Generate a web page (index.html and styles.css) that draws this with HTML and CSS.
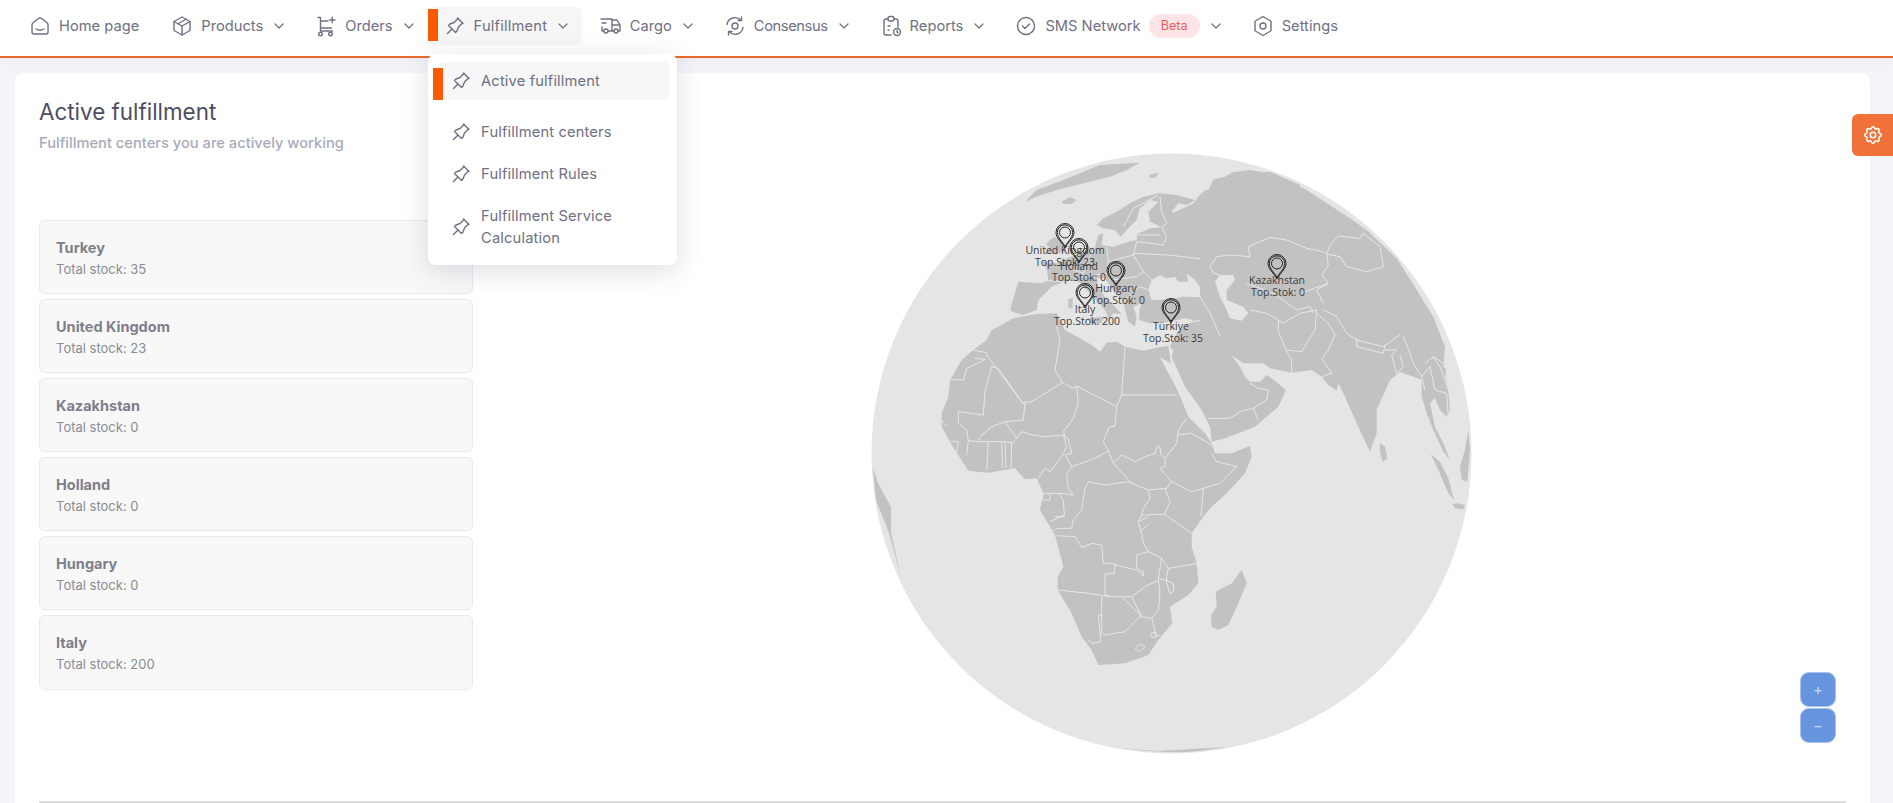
FILE: index.html
```html
<!DOCTYPE html>
<html lang="en">
<head>
<meta charset="utf-8">
<title>Active fulfillment</title>
<link rel="stylesheet" href="styles.css">
</head>
<body>
<svg class="defs" width="0" height="0" aria-hidden="true">
  <symbol id="i-home" viewBox="0 0 24 24"><path d="M19 8.71l-5.333-4.148a2.666 2.666 0 0 0-3.274 0L5.059 8.71a2.665 2.665 0 0 0-1.029 2.105v7.2a2 2 0 0 0 2 2h12a2 2 0 0 0 2-2v-7.2c0-.823-.38-1.6-1.03-2.105"/><path d="M16 15c-2.21 1.333-5.792 1.333-8 0"/></symbol>
  <symbol id="i-box" viewBox="0 0 24 24"><path d="M12 3l8 4.5v9l-8 4.5l-8-4.5v-9l8-4.5"/><path d="M12 12l8-4.5"/><path d="M12 12v9"/><path d="M12 12l-8-4.5"/><path d="M16 5.25l-8 4.5"/></symbol>
  <symbol id="i-cart" viewBox="0 0 24 24"><circle cx="6.500" cy="20" r="1.800"/><circle cx="16.500" cy="20" r="1.800"/><path d="M18.500 17H6.500V3.500H4"/><path d="M6.500 7h7.500"/><path d="M6.500 14h11"/><path d="M15.500 6h5.500"/><path d="M18.250 3.250v5.500"/></symbol>
  <symbol id="i-pin" viewBox="0 0 24 24"><path d="M15 4.500l-4 4l-4 1.500l-1.500 1.500l7 7l1.500-1.500l1.500-4l4-4"/><path d="M9 15l-4.500 4.500"/><path d="M14.500 4l5.500 5.500"/></symbol>
  <symbol id="i-truck" viewBox="0 0 24 24"><circle cx="7" cy="17" r="2"/><circle cx="17" cy="17" r="2"/><path d="M5 17H3v-4M2 5h11v12m-4 0h6m4 0h2v-6h-8m0-5h5l3 5"/><path d="M3 9h4"/></symbol>
  <symbol id="i-sync" viewBox="0 0 24 24"><circle cx="12" cy="12" r="3"/><path d="M4 10.500A8 8 0 0 1 18 6.500"/><path d="M20 13.500A8 8 0 0 1 6 17.500"/><path d="M18.500 3v3.500H15"/><path d="M5.500 21v-3.500H9"/></symbol>
  <symbol id="i-report" viewBox="0 0 24 24"><path d="M9 5H7a2 2 0 0 0-2 2v12a2 2 0 0 0 2 2h5"/><path d="M15 5h2a2 2 0 0 1 2 2v6"/><rect x="9" y="2.500" width="6" height="4.500" rx="2"/><path d="M9 12h2"/><path d="M9 16h1"/><circle cx="18" cy="18" r="3.500"/><path d="M18 16.500V18l1 .5"/></symbol>
  <symbol id="i-check" viewBox="0 0 24 24"><circle cx="12" cy="12" r="8.500"/><path d="M8.500 12l2.500 2.500l4.500-4.500"/></symbol>
  <symbol id="i-hex" viewBox="0 0 24 24"><path d="M12 2.500l8 4.750v9.500l-8 4.750l-8-4.750v-9.500z"/><circle cx="12" cy="12" r="3"/></symbol>
  <symbol id="i-gear" viewBox="0 0 24 24"><path d="M10.325 4.317c.426-1.756 2.924-1.756 3.350 0a1.724 1.724 0 0 0 2.573 1.066c1.543-.94 3.310.826 2.370 2.370a1.724 1.724 0 0 0 1.065 2.572c1.756.426 1.756 2.924 0 3.350a1.724 1.724 0 0 0-1.066 2.573c.94 1.543-.826 3.310-2.370 2.370a1.724 1.724 0 0 0-2.572 1.065c-.426 1.756-2.924 1.756-3.350 0a1.724 1.724 0 0 0-2.573-1.066c-1.543.94-3.310-.826-2.370-2.370a1.724 1.724 0 0 0-1.065-2.572c-1.756-.426-1.756-2.924 0-3.350a1.724 1.724 0 0 0 1.066-2.573c-.94-1.543.826-3.310 2.370-2.370c1 .608 2.296.07 2.572-1.065"/><circle cx="12" cy="12" r="3"/></symbol>
  <symbol id="i-chev" viewBox="0 0 10 10"><path d="M1 3l4 4l4-4"/></symbol>
  <symbol id="i-marker" viewBox="0 0 20 26"><path d="M10 25C7 19 1 15 1 9.500a9 9 0 0 1 18 0C19 15 13 19 10 25z"/><path d="M10 23.500C7.500 18.500 2.300 14.800 2.300 9.500a7.700 7.700 0 0 1 15.400 0C17.700 14.800 12.500 18.500 10 23.500z"/><circle cx="10" cy="9.500" r="5.500"/></symbol>
</svg>

<header class="topbar">
  <nav class="nav">
    <a class="nav-item"><svg class="ico"><use href="#i-home"/></svg><span>Home page</span></a>
    <a class="nav-item"><svg class="ico"><use href="#i-box"/></svg><span>Products</span><svg class="chev"><use href="#i-chev"/></svg></a>
    <a class="nav-item"><svg class="ico"><use href="#i-cart"/></svg><span>Orders</span><svg class="chev"><use href="#i-chev"/></svg></a>
    <div class="nav-wrap">
      <a class="nav-item is-active"><svg class="ico"><use href="#i-pin"/></svg><span>Fulfillment</span><svg class="chev"><use href="#i-chev"/></svg></a>
      <div class="menu">
        <a class="menu-item is-active"><svg class="ico"><use href="#i-pin"/></svg><span>Active fulfillment</span></a>
        <a class="menu-item"><svg class="ico"><use href="#i-pin"/></svg><span>Fulfillment centers</span></a>
        <a class="menu-item"><svg class="ico"><use href="#i-pin"/></svg><span>Fulfillment Rules</span></a>
        <a class="menu-item"><svg class="ico"><use href="#i-pin"/></svg><span>Fulfillment Service Calculation</span></a>
      </div>
    </div>
    <a class="nav-item"><svg class="ico"><use href="#i-truck"/></svg><span>Cargo</span><svg class="chev"><use href="#i-chev"/></svg></a>
    <a class="nav-item nav-tight"><svg class="ico"><use href="#i-sync"/></svg><span>Consensus</span><svg class="chev"><use href="#i-chev"/></svg></a>
    <a class="nav-item"><svg class="ico"><use href="#i-report"/></svg><span>Reports</span><svg class="chev"><use href="#i-chev"/></svg></a>
    <a class="nav-item"><svg class="ico"><use href="#i-check"/></svg><span>SMS Network</span><b class="badge">Beta</b><svg class="chev"><use href="#i-chev"/></svg></a>
    <a class="nav-item"><svg class="ico"><use href="#i-hex"/></svg><span>Settings</span></a>
  </nav>
</header>

<main class="page">
  <section class="card">
    <div class="content">
      <div class="side">
        <h1 class="title">Active fulfillment</h1>
        <p class="subtitle">Fulfillment centers you are actively working</p>
        <ul class="centers">
          <li class="center"><strong>Turkey</strong><span>Total stock: 35</span></li>
          <li class="center"><strong>United Kingdom</strong><span>Total stock: 23</span></li>
          <li class="center"><strong>Kazakhstan</strong><span>Total stock: 0</span></li>
          <li class="center"><strong>Holland</strong><span>Total stock: 0</span></li>
          <li class="center"><strong>Hungary</strong><span>Total stock: 0</span></li>
          <li class="center"><strong>Italy</strong><span>Total stock: 200</span></li>
        </ul>
      </div>
      <div class="map">
        <svg class="globe" viewBox="860 140 630 640" width="630" height="640" role="img" aria-label="Globe with fulfillment centers">
          <defs><clipPath id="disc"><circle cx="1171.500" cy="453.500" r="299"/></clipPath></defs>
          <circle class="ocean" cx="1171.500" cy="453.500" r="300"/>
          <g clip-path="url(#disc)">
            <g transform="translate(850 140) scale(.33333)">
              <path class="land" d="M525 185L560 150L640 120L750 75L870 68L830 90L780 110L700 130L620 150L560 170Z"/>
              <path class="land" d="M635 185L660 172L680 180L665 192L640 192Z"/>
              <path class="land" d="M898 105L925 98L920 112L900 115Z"/>
              <path class="land" d="M588 312L610 292L630 295L650 330L620 342L580 342L600 325Z"/>
              <path class="land" d="M740 255L760 235L800 215L840 190L880 170L925 160L980 165L1035 180L1010 195L985 190L965 215L990 228L950 260L935 262L900 245L895 215L925 185L900 180L870 205L860 240L830 270L812 290L795 270L760 265Z"/>
              <path class="land" d="M505 425L480 510L495 518L520 525L560 510L565 480L605 440L640 425L680 420L700 440L730 470L765 510L775 535L765 552L790 520L815 522L790 495L765 470L745 440L740 415L765 415L785 445L820 485L825 510L835 545L855 560L860 530L850 500L875 490L868 510L868 540L900 550L960 545L1005 535L1030 540L1000 560L980 600L965 625L1000 640L1140 640L1350 640L1350 135L1260 95L1200 100L1150 95L1125 110L1090 118L1075 140L1045 170L1030 190L1000 205L975 215L935 262L900 265L862 282L860 300L835 305L790 320L755 315L760 280L745 285L735 320L700 335L680 345L650 355L620 370L575 365L590 385L595 422L575 430Z"/>
              <path class="land" d="M655 478L668 474L668 505L655 505Z"/>
              <path class="land" d="M715 535L760 530L755 550L725 550Z"/>
              <path class="sea" d="M895 450L905 420L930 405L950 415L975 410L985 425L1015 425L1010 400L1035 420L1065 462L1050 472L1000 470L960 478L925 480L905 480Z"/>
              <path class="sea" d="M1050 150L1075 118L1090 118L1075 150Z"/>
              <path class="sea" d="M1125 145L1150 135L1175 165L1165 185L1145 170Z"/>
              <path class="border" d="M925 165L850 205L820 260M930 170L935 215L950 250L935 262M865 285L930 285M860 305L940 315L950 290L935 262M850 340L950 345L1000 350L1080 360L1085 390M770 320L775 365L850 345L860 305M735 320L720 350L700 400L670 390M700 410L770 400L775 365M850 345L880 395L905 420M770 400L790 420L860 410L880 395M820 485L870 440L895 450M595 422L640 425M1020 455L1090 490L1075 505L1090 535L1000 550M1090 535L1060 590L1015 600L985 600M1075 505L1090 535L1110 590L1140 640M1015 600L1060 640L1140 640"/>
            </g>
            <g transform="translate(1200 150) scale(.33333)">
              <path class="land" d="M0 140L110 65L150 60L210 70L320 120L450 205L500 240L590 325L650 420L700 500L735 590L730 650L745 720L750 780L740 800L720 780L705 745L690 760L705 830L730 880L750 930L730 905L700 840L680 790L665 740L665 690L640 680L610 670L600 665L570 690L530 780L530 850L510 905L470 820L430 730L415 700L410 722L385 705L365 680L335 660L275 668L210 655L190 640L130 640L85 610L0 610Z"/>
              <path class="land" d="M540 880L555 890L562 925L548 935L540 905Z"/>
              <path class="land" d="M727 650L737 655L737 675L728 670Z"/>
              <path class="land" d="M692 912L720 935L745 985L762 1050L745 1030L715 960Z"/>
              <path class="land" d="M805 840L810 900L802 995L785 990L780 950L795 900Z"/>
              <path class="land" d="M757 1062L770 1060L795 1065L790 1078L765 1075Z"/>
              <path class="sea" d="M45 395L60 375L100 375L105 390L80 420L80 450L130 470L145 490L125 512L90 505L80 480L60 440Z"/>
              <path class="border" d="M30 350L50 320L90 315L150 320L145 290L210 262L260 270L320 295L370 305L380 312L385 345L365 375L385 400L350 420L370 460M30 350L40 370L60 375M380 312L390 285L415 258L480 265L490 250L540 290L550 350L500 365L440 350L420 320L380 312M140 400L220 430L290 480L330 470L340 490M150 480L200 490L235 510L250 520L300 490M300 430L385 400M235 510L235 545L258 600L275 630L275 668M258 600L305 605L345 540L350 480L300 490M350 490L385 520L405 555L385 600L365 625L395 670L365 680M370 480L410 500L440 550L470 570L550 590L600 555M470 565L470 590L550 610L555 585M555 600L590 600L575 615L590 670L610 650L600 615M610 560L630 610L640 640L665 680L675 720M675 640L700 620L720 650L745 720M665 680L690 650L705 720L740 730L745 800M700 620L730 640M0 440L30 490L70 580L85 610M0 625L75 625L90 610"/>
            </g>
            <g transform="translate(925 320) scale(.33333)">
              <path class="land" d="M265 -5L335 -18L395 -20L420 30L470 58L500 75L525 95L545 68L575 65L600 80L655 92L700 82L730 78L738 130L705 112L725 150L750 195L770 240L790 290L840 340L860 370L870 400L920 400L975 378L980 410L960 460L905 520L860 560L835 590L800 640L800 680L815 730L820 790L790 825L735 860L742 910L700 960L670 1005L600 1030L520 1035L500 990L470 950L440 880L398 810L398 770L415 740L390 645L345 570L355 520L335 475L300 478L270 445L190 458L130 452L80 375L50 320L50 280L70 230L75 180L110 120L145 90L185 60L200 30L230 15Z"/>
              <path class="land" d="M745 90L740 110L780 200L830 270L855 320L860 365L900 355L990 320L1060 260L1083 210L1040 175L1025 165L1005 185L975 185L960 170L945 140L915 100L900 50L760 30L735 80Z"/>
              <path class="land" d="M950 750L965 790L940 850L910 915L880 930L860 920L858 885L875 860L872 815L920 790Z"/>
              <path class="border" d="M145 90L185 98L185 105L290 245M148 115L182 118L125 145L115 180L78 178M200 140L220 145L290 245M200 140L180 215L175 285L100 275L100 310L125 330L130 362L125 405M395 20L405 60L400 90L390 150L412 188L320 245L290 248L300 250L295 300L240 305L200 320L165 350L160 365L130 362M412 188L445 205L455 198L460 250L445 295L415 335L420 345L360 350L320 345L290 335L275 355L240 305M455 198L575 260L590 225L600 80M590 225L755 225M575 260L570 318L552 322L535 365L550 393L510 415L440 440L420 405L440 400L430 360L420 345M440 440L425 465L430 505L445 525M480 505L490 485L540 495L610 485L620 490M550 393L565 430L620 490M565 430L590 405L630 425L665 408L690 400L695 380L705 380L708 405L720 415L720 440L705 445L740 485L725 505L670 510L620 490M785 295L760 330L755 370L720 415M760 345L800 340L860 375M860 400L875 425L935 440L885 490L835 505L800 515L740 485M835 505L828 590M720 505L735 545L718 583L800 640M670 510L675 535L655 565L650 585L718 583M650 585L640 605L650 640L655 670L670 695M640 605L670 590M645 635L668 615M670 695L710 715L730 745L818 730M635 705L635 745L655 755L655 768L635 750L570 735L565 730L535 730L530 675L500 670L470 683L450 650L395 647M635 705L670 695M540 762L568 760L570 730M540 762L540 825L560 830M398 810L490 820L560 830L590 830L620 830L660 800M710 715L700 775L720 780L745 790L745 815L735 820L725 790L725 770L730 745M660 800L700 780M620 830L650 890L680 895L700 870L705 815L700 780M590 830L620 860L650 890M530 830L530 885L520 885L528 965L500 970L490 960M530 885L530 940L540 945L600 935L640 895L650 890M680 895L695 950L705 945M50 300L65 320M78 365L100 365L95 400M190 365L185 450M230 365L232 445M243 445L240 365M260 365L258 445M275 355L262 370L245 365L185 365L160 365M415 345L425 380L410 410L375 455L360 445L340 475M445 525L400 520L355 520L350 540L375 540L375 522M400 520L415 540L418 585L375 605M390 590L420 590M480 505L470 570L445 600L440 625L400 625L385 630M850 295L915 295L945 275L985 265L1025 240L1030 210L1000 205L975 190M985 265L1000 300"/>
              <circle class="ring" cx="685" cy="945" r="8"/>
              <path class="ring" d="M630 985L645 972L660 980L645 995Z"/>
            </g>
            <path class="land" d="M873 468L878 483L891 507L891 533L901 577L889 533L876 500Z"/>
            <path class="land" d="M1117 748L1158 751L1227 747L1186 753L1146 751Z"/>
          </g>
          <g class="markers">
            <use href="#i-marker" x="1055" y="223" width="20" height="26"/>
            <use href="#i-marker" x="1069" y="238" width="20" height="26"/>
            <use href="#i-marker" x="1106" y="261" width="20" height="26"/>
            <use href="#i-marker" x="1075" y="283" width="20" height="26"/>
            <use href="#i-marker" x="1161" y="298" width="20" height="26"/>
            <use href="#i-marker" x="1267" y="254" width="20" height="26"/>
          </g>
          <g class="labels">
            <text x="1065" y="254">United Kingdom</text><text x="1065" y="266">Top.Stok: 23</text>
            <text x="1079" y="269.500">Holland</text><text x="1079" y="281">Top.Stok: 0</text>
            <text x="1116" y="292">Hungary</text><text x="1118" y="304">Top.Stok: 0</text>
            <text x="1085" y="313">Italy</text><text x="1087" y="325">Top.Stok: 200</text>
            <text x="1171" y="330">Türkiye</text><text x="1173" y="342">Top.Stok: 35</text>
            <text x="1277" y="284">Kazakhstan</text><text x="1278" y="296">Top.Stok: 0</text>
          </g>
        </svg>
        <div class="zoom">
          <button class="zoom-btn" type="button">+</button>
          <button class="zoom-btn" type="button">−</button>
        </div>
      </div>
    </div>
  </section>
</main>
<a class="tab"><svg class="tab-ico"><use href="#i-gear"/></svg></a>
</body>
</html>
```

FILE: styles.css
```css
* { box-sizing: border-box; }
html, body { height: 100%; }
body {
  margin: 0;
  height: 803px;
  overflow: hidden;
  background: #f5f5f9;
  font-family: Inter, "Liberation Sans", sans-serif;
  color: #6f7083;
}
.defs { position: absolute; }
.ico { width: 24px; height: 24px; flex: none; margin: 0 7px 0 -4px; fill: none; stroke: #6f7083; stroke-width: 1.400; stroke-linecap: round; stroke-linejoin: round; }
.chev { width: 10px; height: 10px; flex: none; margin: 0 -1px 0 11px; fill: none; stroke: #6f7083; stroke-width: 1.200; stroke-linecap: round; stroke-linejoin: round; }

.topbar {
  height: 58px;
  background: #fff;
  border-bottom: 2px solid #e9692c;
  box-shadow: 0 4px 12px rgba(60, 60, 90, .05);
  position: relative;
  z-index: 2;
}
.nav { display: flex; align-items: center; height: 52px; padding-left: 16px; gap: 6px; }
.nav-wrap { position: relative; margin: 0 -1px 0 -3.500px; }
.nav-item {
  display: flex;
  align-items: center;
  height: 38px;
  padding: 0 13px 0 16px;
  font-size: 14.700px;
  white-space: nowrap;
  position: relative;
  border-radius: 6px;
}
.nav-tight span { letter-spacing: -.4px; }
.nav-item.is-active { background: #f6f6f7; padding: 0 14.500px 0 18.500px; }
.nav-item.is-active span { letter-spacing: .2px; }
.nav-item.is-active::before,
.menu-item.is-active::before {
  content: "";
  position: absolute;
  background: #fb5a00;
}
.nav-item.is-active::before { left: 0; top: 2px; width: 10px; height: 32px; }
.badge {
  font-weight: 400;
  font-size: 12.500px;
  color: #ef5b60;
  background: #fde4e5;
  width: 51px;
  height: 24px;
  line-height: 24px;
  text-align: center;
  border-radius: 12px;
  margin: 0 0 0 8px;
}

.menu {
  position: absolute;
  left: 0;
  top: 47px;
  width: 249px;
  height: 211px;
  padding: 8px 7px 0 9px;
  background: #fff;
  border-radius: 8px;
  box-shadow: 0 6px 28px rgba(50, 50, 80, .16);
  z-index: 5;
}
.menu-item {
  display: flex;
  align-items: center;
  position: relative;
  font-size: 14.700px;
  letter-spacing: .15px;
  line-height: 22px;
  padding: 0 20px 0 16px;
  height: 42px;
  border-radius: 6px;
}
.menu-item .ico { margin-right: 8px; }
.menu-item.is-active { background: #f7f7f8; height: 38px; margin-bottom: 11px; }
.menu-item.is-active::before { left: -4px; top: 6px; width: 10px; height: 32px; }
.menu-item:last-child { height: 44px; margin-top: 10px; }

.page { padding: 15px 23px 0 15px; }
.card { background: #fff; border-radius: 8px; height: 760px; padding: 24px 24px 0; }
.content { display: flex; height: 706px; border-bottom: 2px solid #dbdbdb; }
.side { width: 434px; flex: none; }
.title { margin: 0; font-size: 22.400px; line-height: 30px; font-weight: 400; color: #4d4d62; }
.subtitle { margin: 6px 0 0; font-size: 14.700px; line-height: 20px; font-weight: 500; color: #a9aab9; }
.centers { list-style: none; margin: 66.500px 0 0; padding: 0; display: flex; flex-direction: column; gap: 5px; }
.center {
  height: 74.200px;
  padding: 17px 16px 0;
  background: #f8f8f9;
  border: 1px solid #e8e8ef;
  border-radius: 6px;
  display: flex;
  flex-direction: column;
}
.center strong { font-size: 14.500px; line-height: 20px; font-weight: 700; color: #7e7f89; }
.center span { font-size: 13px; line-height: 20px; margin-top: 1px; color: #8a8b93; }

.map { position: relative; flex: 1; }
.globe { display: block; margin: 43px 0 0 387px; }
.ocean { fill: #e5e5e5; }
.land { fill: #c2c2c2; }
.sea { fill: #e5e5e5; }
.border, .ring { fill: none; stroke: #ececec; stroke-width: 2.600; stroke-linejoin: round; }
.markers use { fill: none; stroke: #111; stroke-width: .9; }
.labels text { font-family: "Open Sans", sans-serif; font-size: 10.500px; text-anchor: middle; fill: #3a3a3a; }

.zoom { position: absolute; right: 10px; top: 575px; display: flex; flex-direction: column; gap: 1px; }
.zoom-btn {
  width: 36px;
  height: 35px;
  padding: 0;
  font-family: inherit;
  font-size: 15px;
  line-height: 1;
  color: #c7d7f3;
  background: #6794de;
  border: 1px solid #a6c1ee;
  border-radius: 9px;
}

.tab {
  position: absolute;
  right: 0;
  top: 114px;
  width: 41px;
  height: 42px;
  display: flex;
  align-items: center;
  justify-content: center;
  background: #f07238;
  border-radius: 6px 0 0 6px;
  z-index: 3;
}
.tab-ico { width: 22px; height: 22px; fill: none; stroke: #fff; stroke-width: 1.700; }
```
